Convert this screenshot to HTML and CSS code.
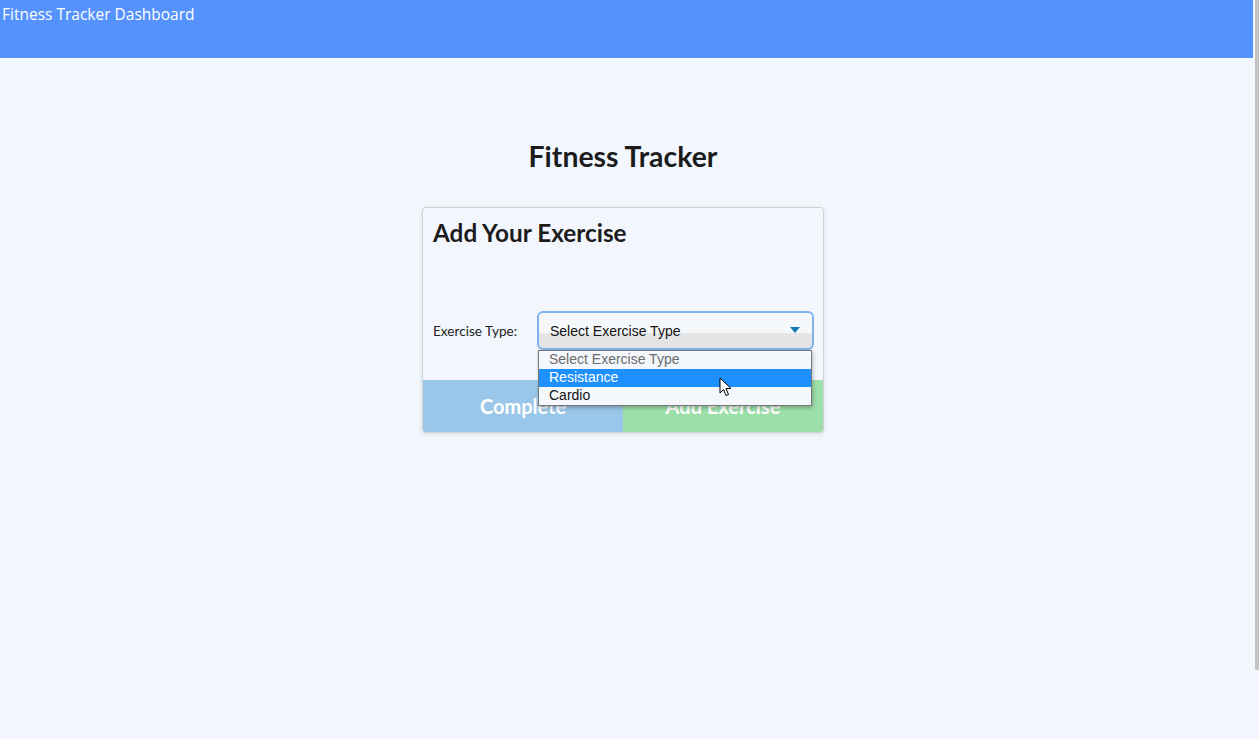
FILE: index.html
```html
<!DOCTYPE html>
<html>
<head>
<meta charset="utf-8">
<title>Fitness Tracker</title>
<link rel="stylesheet" href="styles.css">
</head>
<body>
<div class="page">
  <div class="main">
    <header class="topbar">Fitness Tracker Dashboard</header>
    <section class="content">
      <h1 class="title">Fitness Tracker</h1>
      <div class="card">
        <h2 class="card-title">Add Your Exercise</h2>
        <div class="form-row">
          <label class="label">Exercise Type:</label>
          <div class="select-wrap">
            <div class="select">
              <span class="select-text">Select Exercise Type</span>
              <span class="arrow"></span>
            </div>
            <ul class="listbox">
              <li class="opt placeholder">Select Exercise Type</li>
              <li class="opt active">Resistance</li>
              <li class="opt">Cardio</li>
            </ul>
            <svg class="cursor" width="13" height="20" viewBox="0 0 13 20">
              <path d="M1 1 L1 16 L4.5 12.5 L7 18.5 L9.5 17.5 L7 11.5 L12 11.5 Z" fill="#fff" stroke="#000" stroke-width="1" stroke-linejoin="round"/>
            </svg>
          </div>
        </div>
        <div class="actions">
          <button class="btn btn-complete">Complete</button>
          <button class="btn btn-add">Add Exercise</button>
        </div>
      </div>
    </section>
  </div>
  <div class="sidebar-track"></div>
</div>
</body>
</html>
```
FILE: styles.css
```css
html, body {
  margin: 0;
  padding: 0;
  background: #f2f7fe;
}
body {
  font-family: "Lato", "Open Sans", sans-serif;
}
.page {
  display: flex;
  align-items: flex-start;
  gap: 2px;
  height: 739px;
  overflow: hidden;
}
.main {
  width: 1253px;
  flex: none;
}
.sidebar-track {
  width: 4px;
  height: 670px;
  background: #c3c3c3;
  flex: none;
}
.topbar {
  height: 58px;
  background: #5592fd;
  color: #fff;
  font-family: "Open Sans", "Noto Sans", sans-serif;
  font-size: 15.5px;
  line-height: 28px;
  padding-left: 2px;
  box-sizing: border-box;
}
.content {
  display: flex;
  flex-direction: column;
  align-items: center;
  padding-right: 7px;
}
.title {
  margin: 81px 0 0 0;
  font-size: 28.4px;
  line-height: 34px;
  font-weight: 700;
  color: #1c1c1c;
}
.card {
  margin-top: 34px;
  width: 402px;
  box-sizing: border-box;
  border: 1px solid #cfd2d6;
  border-radius: 4px;
  background: #f3f7fd;
  box-shadow: 0 1px 4px rgba(0,0,0,0.12);
  overflow: visible;
  position: relative;
}
.card-title {
  margin: 0;
  padding: 10px 10px 0 10px;
  font-size: 24.3px;
  line-height: 30px;
  font-weight: 700;
  color: #1c1c1c;
}
.form-row {
  display: flex;
  align-items: center;
  padding: 62px 9px 0 10px;
  height: 41px;
}
.label {
  font-size: 13.6px;
  color: #222;
  width: 104px;
  flex: none;
}
.select-wrap {
  position: relative;
  flex: 1;
}
.select {
  height: 39px;
  box-sizing: border-box;
  border: 2px solid #7fb2ef;
  border-radius: 6px;
  background: linear-gradient(to bottom, #f5f8fb 0%, #f5f8fb 56%, #e6e6e6 58%, #e3e3e3 100%);
  display: flex;
  align-items: center;
  padding: 0 10px 0 11px;
  font-family: "Liberation Sans", Arial, sans-serif;
  font-size: 14px;
  color: #111;
}
.select-text {
  flex: 1;
}
.arrow {
  width: 0;
  height: 0;
  border-left: 5px solid transparent;
  border-right: 5px solid transparent;
  border-top: 6px solid #1079b0;
  margin-right: 2px;
  margin-top: -1px;
}
.listbox {
  position: absolute;
  left: 1px;
  right: 2px;
  top: 39px;
  margin: 0;
  padding: 0;
  list-style: none;
  background: #f4f7fc;
  border: 1px solid #767676;
  box-shadow: 1px 2px 4px rgba(0,0,0,0.25);
  font-family: "Liberation Sans", Arial, sans-serif;
  font-size: 14px;
  z-index: 5;
}
.opt {
  height: 18px;
  line-height: 17px;
  padding-left: 10px;
  color: #111;
}
.opt.placeholder {
  color: #6d6d6d;
}
.opt.active {
  background: #1e90ff;
  color: #fff;
}
.cursor {
  position: absolute;
  left: 182px;
  top: 66px;
  z-index: 6;
}
.actions {
  display: flex;
  margin-top: 29px;
}
.btn {
  flex: 1;
  height: 52px;
  border: none;
  margin: 0;
  font-family: "Lato", sans-serif;
  font-weight: 700;
  font-size: 20px;
  color: #fff;
}
.btn-complete {
  background: #9ac7e9;
  border-bottom-left-radius: 3px;
}
.btn-add {
  background: #9ddfa9;
  border-bottom-right-radius: 3px;
}
```
